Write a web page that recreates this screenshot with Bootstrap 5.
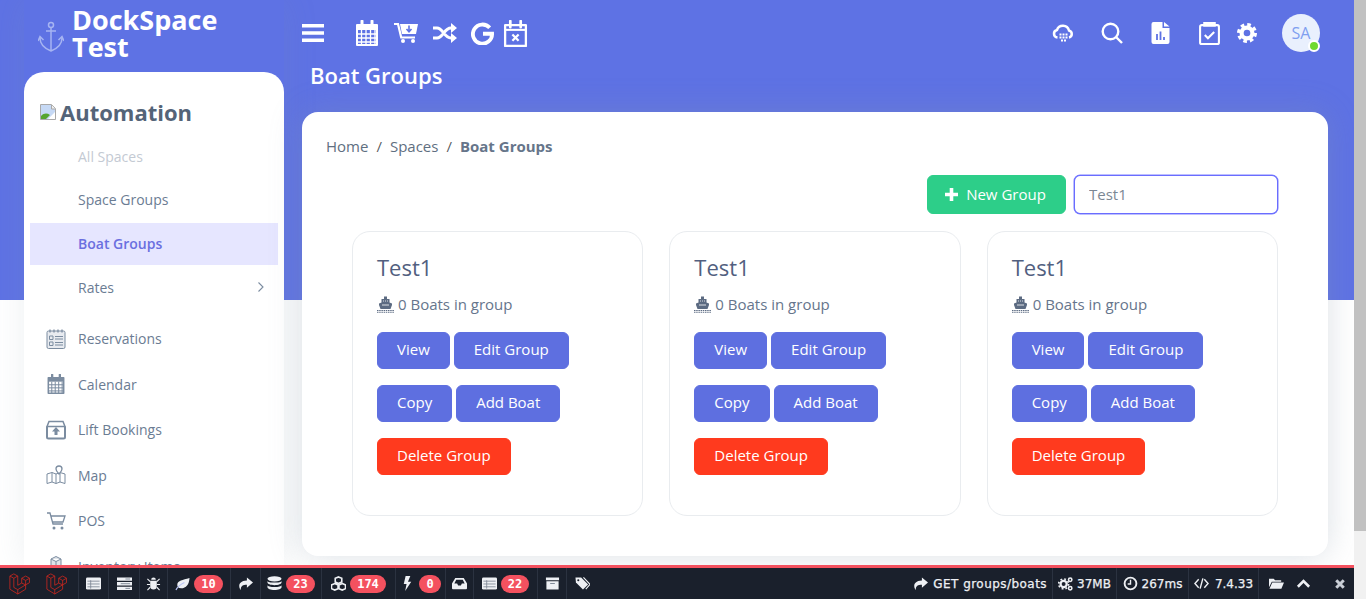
<!DOCTYPE html>
<html lang="en">
<head>
  <meta charset="UTF-8" />
  <meta name="viewport" content="width=device-width, initial-scale=1">
  <title>Boat Groups</title>
  <link href="https://cdn.jsdelivr.net/npm/bootstrap@5.3.0/dist/css/bootstrap.min.css" rel="stylesheet">
  <style>
    html, body { height: 100%; overflow: hidden; }
    body { font-family: "Open Sans", sans-serif; font-size: 14px; color: #525f7f; background: #fff; }

    /* fake browser scrollbar */
    .rail { width: 12px; background: #f1f1f1; flex: none; }
    .rail-thumb { height: 531px; background: #c1c1c1; }

    .page-col { flex: 1 1 auto; min-width: 0; height: 599px; }
    .stage { flex: 1 1 auto; min-height: 0; overflow: hidden; background: linear-gradient(#5e72e4 300px, #fff 300px); }

    /* sidebar */
    .side-col { width: 260px; margin-left: 24px; flex: none; box-shadow: 0 0 2rem 0 rgba(136,152,170,.15); }
    .brand-row { height: 72px; padding-left: 14px; color: #fff; }
    .brand-name { font-size: 27px; font-weight: 700; line-height: 27px; margin-left: 8px; margin-top: -6px; }
    .anchor-ico { width: 26px; height: 32px; color: #a6b4f2; margin-top: 2px; }
    .side-panel { background: #fff; border-radius: 20px 20px 0 0; height: 500px; padding: 25px 6px 0; }
    .side-title { font-size: 22px; font-weight: 700; color: #546478; line-height: 30px; margin: 0 0 8.6px 10px; display: flex; align-items: center; }
    .broken-ico { width: 16px; height: 16px; margin-right: 4px; }
    .side-link { display: flex; align-items: center; padding: 0 13px 1px 48px; color: #6b7c93; text-decoration: none; font-size: 14px; }
    .sub-link { height: 42px; margin-bottom: 1.67px; }
    .main-link { height: 45.5px; padding-left: 16px; }
    .side-link.is-faded { color: #c4cad3; }
    .side-link.is-active { background: #e6e6ff; color: #6a6fe0; font-weight: 600; }
    .side-ico { width: 20px; height: 20px; margin-right: 12px; color: #7b8ca0; flex: none; }
    .side-spacer { height: 6.5px; }

    /* main */
    .main-col { flex: 1 1 auto; min-width: 0; padding: 0 26px 0 18px; }
    .top-row { height: 66px; color: #fff; }
    .top-ico { color: #fff; flex: none; display: block; }
    .menu-ico { margin-right: 31px; }
    .ms-15 { margin-right: 15px; }
    .ms-14 { margin-right: 14px; }
    .ms-9 { margin-right: 9px; }
    .ms-26 { margin-right: 26px; }
    .ms-28 { margin-right: 28px; }
    .ms-29 { margin-right: 29px; }
    .ms-17 { margin-right: 17px; }
    .ms-25 { margin-right: 25px; }
    .avatar-end { width: 8px; }
    .page-heading { font-size: 22px; font-weight: 600; color: #fff; line-height: 22px; margin: -2px 0 26px 8px; height: 22px; }
    .avatar-box { width: 38px; height: 38px; background: #e9f0fd; color: #7f9ff0; font-size: 16px; position: relative; }
    .avatar-dot { position: absolute; right: 0; bottom: 0; width: 12px; height: 12px; border: 2px solid #fff; background: #6fd92f; border-radius: 50%; }
    .sheet { border-radius: 16px; height: 444px; padding: 24px; border: 0; box-shadow: 0 0 2rem 0 rgba(136,152,170,.3); }
    .sheet .breadcrumb { font-size: 15px; margin: -1px 0 18px; line-height: 22px; }
    .sheet .breadcrumb a { color: #5f6f81; text-decoration: none; }
    .sheet .breadcrumb-item.active { color: #66758a; font-weight: 700; }
    .sheet .breadcrumb-item.active::before { font-weight: 400; }
    .tools-row { padding-right: 26px; gap: 8px; margin-bottom: 17px; }
    .btn-new { background: #2dce89; border-color: #2dce89; color: #fff; width: 139px; height: 39px; font-size: 15px; border-radius: 6px; padding: 0 2px 0 0; }
    .search-box { width: 204px; height: 39px; border: 1px solid #6a6dff; border-radius: 6px; font-size: 15px; color: #7b8794; padding: 0 14px 2px; box-shadow: 0 0 0 .5px #7d80ff; }
    .boats-row { --bs-gutter-x: 26px; margin-left: 13px; margin-right: 13px; }
    .boat-card { height: 285px; border: 1px solid #e9ecef; border-radius: 18px; box-shadow: none; }
    .boat-card .card-body { padding: 22px 24px 24px; }
    .boat-card h5 { font-size: 22px; font-weight: 400; color: #525f7f; line-height: 26px; margin: 0 0 14px; }
    .boat-line { font-size: 15px; color: #66758c; line-height: 20px; margin-bottom: 18px; display: flex; align-items: center; }
    .ship-ico { width: 17px; height: 17px; margin-right: 4px; color: #5c6b82; }
    .btn-row { gap: 4px; margin-bottom: 16px; }
    .btn-boat, .btn-del { height: 37px; padding: 0 19px 2px; font-size: 15px; color: #fff; border-radius: 6px; }
    .btn-boat { background: #5e6fe0; border-color: #5e6fe0; }
    .btn-del { background: #ff3a1e; border-color: #ff3a1e; }

    /* debug bar */
    .dbar { flex: none; height: 34px; background: #1a202c; border-top: 3px solid #f4515f; color: #eef0f4; font-family: "DejaVu Sans", sans-serif; font-size: 12px; font-weight: 400; }
    .dtab { height: 100%; display: flex; align-items: center; justify-content: center; gap: 4px; border-right: 1px solid #2b3240; flex: none; }
    .dtab svg { width: 15px; height: 15px; flex: none; display: block; }
    .dlogo { width: 79px; padding-left: 9px; justify-content: flex-start; gap: 16px; }
    .dlogo svg { width: 21px; height: 23px; color: #d0281f; }
    .tw-28 { width: 28px; }
    .tw-29 { width: 29px; }
    .tw-30 { width: 30px; }
    .tw-31 { width: 31px; }
    .tw-50 { width: 50px; }
    .tw-61 { width: 61px; }
    .tw-63 { width: 63px; }
    .tw-64 { width: 64px; }
    .tw-70 { width: 70px; gap: 6px; }
    .tw-72 { width: 72px; }
    .tw-74 { width: 74px; }
    .dcount { background: #f4515f; color: #fff; font-family: "DejaVu Sans Mono", monospace; font-weight: 700; font-size: 12px; height: 18px; line-height: 18px; padding: 0 7px; border-radius: 9px; }
    .dtext { white-space: nowrap; -webkit-text-stroke: .25px #eef0f4; }
    .dtext-wide { letter-spacing: .45px; }
    .dbar-end { margin-left: auto; }
    .dtab-get { padding: 0 5px; gap: 5px; }
    .dtab-plain { border-right: 0; justify-content: flex-start; }
    .dt-folder { padding-left: 10px; }
    .dt-up { padding-left: 12px; }
    .dt-close { padding: 0 8px 0 23px; }
    .dt-close svg { width: 12px; height: 12px; }
  </style>
</head>
<body class="d-flex">
  <svg width="0" height="0" class="d-none">
    <defs>
      <symbol id="i-cal" viewBox="0 0 24 26"><path d="M2 5h20v20H2z" fill="none" stroke="currentColor" stroke-width="2" stroke-linejoin="round"/><path d="M2 5h20v5H2z" fill="currentColor"/><path d="M7 1v6M17 1v6" stroke="currentColor" stroke-width="3" stroke-linecap="round"/><path d="M2 14h20M2 18h20M2 22h20M6.5 10v15M11 10v15M15.500 10v15M20 10v15" stroke="currentColor" stroke-width="1.300"/></symbol>
      <symbol id="i-calx" viewBox="0 0 24 26"><path d="M2 5h20v20H2z" fill="none" stroke="currentColor" stroke-width="2.200" stroke-linejoin="round"/><path d="M2 9.500h20" stroke="currentColor" stroke-width="2"/><path d="M7 1v6M17 1v6" stroke="currentColor" stroke-width="2.600" stroke-linecap="round"/><path d="M9 14l6 6M15 14l-6 6" stroke="currentColor" stroke-width="2.200"/></symbol>
      <symbol id="i-cartdown" viewBox="0 0 24 20"><path d="M6 1h18l-2 10H8z" fill="currentColor"/><path d="M15 2.500v6M12.500 6l2.500 2.800L17.500 6" fill="none" stroke="#5e72e4" stroke-width="1.600"/><path d="M0 1h4l3.200 13.500H21" fill="none" stroke="currentColor" stroke-width="2.200"/><circle cx="9" cy="18" r="2" fill="currentColor"/><circle cx="19" cy="18" r="2" fill="currentColor"/></symbol>
      <symbol id="i-shuffle" viewBox="0 0 24 20"><path d="M0 5h4c6 0 7 10 14 10h1M0 15h4c6 0 7-10 14-10h1" fill="none" stroke="currentColor" stroke-width="3"/><path d="M18 0l6 5-6 5zM18 10l6 5-6 5z" fill="currentColor"/></symbol>
      <symbol id="i-g" viewBox="0 0 24 24"><path d="M19.500 6a10 10 0 1 0 2.500 6.300H12.500" fill="none" stroke="currentColor" stroke-width="4"/></symbol>
      <symbol id="i-cloud" viewBox="0 0 24 20"><path d="M6.500 14.500a3.800 3.800 0 0 1-.5-7.500 6.300 6.300 0 0 1 12 .5 3.600 3.600 0 0 1 0 7" fill="none" stroke="currentColor" stroke-width="2.500"/><path d="M8.500 10.500h2v2h-2zM11.500 10.500h2v2h-2zM14.500 10.500h2v2h-2zM8.500 13.500h2v2h-2zM11.500 13.500h2v2h-2zM14.500 13.500h2v2h-2zM10 16.500h2v2h-2zM13 16.500h2v2h-2z" fill="currentColor"/></symbol>
      <symbol id="i-search" viewBox="0 0 22 22"><circle cx="9.500" cy="9.500" r="7.800" fill="none" stroke="currentColor" stroke-width="2.400"/><path d="M15 15l6 6" stroke="currentColor" stroke-width="2.400"/></symbol>
      <symbol id="i-file" viewBox="0 0 18 22"><path d="M2 0h9v6h7v14a2 2 0 0 1-2 2H2a2 2 0 0 1-2-2V2a2 2 0 0 1 2-2zM12.500 0L18 4.500h-5.500z" fill="currentColor"/><path d="M5.500 12v6M9 9.500V18M12.500 15v3" stroke="#5e72e4" stroke-width="1.800"/></symbol>
      <symbol id="i-clip" viewBox="0 0 20 22"><path d="M2.500 3h15a1.500 1.500 0 0 1 1.500 1.500v15a1.500 1.500 0 0 1-1.500 1.500h-15A1.500 1.500 0 0 1 1 19.500v-15A1.500 1.500 0 0 1 2.500 3z" fill="none" stroke="currentColor" stroke-width="2"/><path d="M4 0h12v4.500H4z" fill="currentColor"/><path d="M5.500 12.500l3 3 6-6" fill="none" stroke="currentColor" stroke-width="2"/></symbol>
      <symbol id="i-gear" viewBox="0 0 24 24"><circle cx="12" cy="12" r="6.500" fill="none" stroke="currentColor" stroke-width="5"/><circle cx="12" cy="12" r="10" fill="none" stroke="currentColor" stroke-width="4" stroke-dasharray="4.300 3.550"/></symbol>
      <symbol id="i-anchor" viewBox="0 0 26 32"><circle cx="13" cy="4" r="2.500" fill="none" stroke="currentColor" stroke-width="1.500"/><path d="M13 6.500V30M8 10h10M2 17c0 7 6 11 11 13 5-2 11-6 11-13M0 20l2-4.500 3.500 3.500M26 20l-2-4.500-3.500 3.500" fill="none" stroke="currentColor" stroke-width="1.500"/></symbol>
      <symbol id="i-broken" viewBox="0 0 16 16"><path d="M.5.500h11l4 4v11H.5z" fill="#fff" stroke="#a9a9a9"/><path d="M1 1h10v4h4v3L8 15H1z" fill="#c6d9f5"/><path d="M1 15v-3c3-3 6-3 9-1l-4 4z" fill="#56a52e"/><path d="M11.500 1v4h4" fill="#eee" stroke="#a9a9a9"/></symbol>
      <symbol id="i-resv" viewBox="0 0 20 20"><rect x="1" y="2" width="18" height="17.500" rx="1.500" fill="#e8ebf0" stroke="currentColor"/><path d="M4 .5v3M8 .5v3M12 .5v3M16 .5v3" stroke="currentColor" stroke-width="1.300"/><path d="M9 7.500h8M9 10h8M9 13.500h8M9 16h8" stroke="currentColor"/><path d="M3.500 7h3.500v3.500H3.500zM3.500 13h3.500v3.500H3.500z" fill="none" stroke="currentColor"/></symbol>
      <symbol id="i-lift" viewBox="0 0 20 20"><path d="M1 6.500V17a1.500 1.500 0 0 0 1.500 1.500h15A1.500 1.500 0 0 0 19 17V6.500" fill="none" stroke="currentColor" stroke-width="2"/><path d="M3 1.500h14L19 6.500H1z" fill="none" stroke="currentColor" stroke-width="1.500"/><path d="M10 7l-4 4.500h2.500V15h3v-3.500H14z" fill="currentColor"/></symbol>
      <symbol id="i-map" viewBox="0 0 20 20"><path d="M1 9l5-1.500 4 1.500 4-1.500 5 1.500v9.500l-5-1.500-4 1.500-4-1.500-5 1.500zM6 7.500V17M10 9v9.500M14 7.500V17" fill="none" stroke="currentColor"/><path d="M13 1a3 3 0 0 1 3 3c0 2-3 5-3 5s-3-3-3-5a3 3 0 0 1 3-3z" fill="#fff" stroke="currentColor" stroke-width="1.300"/></symbol>
      <symbol id="i-cart" viewBox="0 0 20 20"><path d="M1 2h3l3 11h10M4.800 5H19l-2 6H6.500" fill="none" stroke="currentColor" stroke-width="1.300"/><circle cx="8" cy="17" r="1.500" fill="currentColor"/><circle cx="16" cy="17" r="1.500" fill="currentColor"/></symbol>
      <symbol id="i-box" viewBox="0 0 20 20"><path d="M5 3l5-2.500L15 3v15l-5 2-5-2zM10 5.500V20M5 3l5 2.500L15 3" fill="#dfe3e8" stroke="currentColor"/></symbol>
      <symbol id="i-ship" viewBox="0 0 17 17"><path d="M7 .5h3V3H7zM4.500 3h8v3.500l2.500 1V9l-1.500 4h-10L2 9V7.500l2.500-1z" fill="currentColor"/><path d="M6 5h1M8 5h1M10 5h1M5 9h7" stroke="#fff" stroke-width=".8"/><path d="M0 14.500h17M0 16.200h17" stroke="currentColor" stroke-width="1.100" stroke-dasharray="1.500 .7"/></symbol>
      <symbol id="i-lara" viewBox="0 0 24 26"><path d="M1 4.500L5.500 2 10 4.500V15l4.500-2.500V7L19 4.500 23.500 7v5L19 14.500v5L10 25l-9-5.500zM1 4.500L5.500 7 10 4.500M5.500 7v10.500L10 20l9-5.500M14.500 7L19 9.500 23.500 7M19 9.500v5M14.500 12.500l4.500 2M10 20v5" fill="none" stroke="currentColor" stroke-width=".9" stroke-linejoin="round"/></symbol>
      <symbol id="d-list" viewBox="0 0 16 16"><rect y="1.500" width="16" height="13" rx="1.500" fill="currentColor"/><path d="M1.500 5.500h13M1.500 8.500h13M1.500 11.500h13M5 4.500v9" stroke="#7d8694" stroke-width=".9"/></symbol>
      <symbol id="d-server" viewBox="0 0 16 16"><path d="M0 1.500h16v3.500H0zM0 6.500h16V10H0zM0 11.500h16V15H0z" fill="currentColor"/><path d="M9 3.200h5M4 8.200h10M9 13.200h5" stroke="#7d8694"/></symbol>
      <symbol id="d-bug" viewBox="0 0 16 16"><path d="M5.500 4a2.500 2.500 0 0 1 5 0zM4.500 5h7v6a3.500 3.500 0 0 1-7 0z" fill="currentColor"/><path d="M1.500 3l3 3M14.500 3l-3 3M1 9h3.500M15 9h-3.500M1.500 15l3-3M14.500 15l-3-3" stroke="currentColor" stroke-width="1.200"/></symbol>
      <symbol id="d-leaf" viewBox="0 0 16 16"><path d="M15.500 2C15 9 12 13 6.500 13 3.500 13 2 11 2.500 8.500 3 5 8 4 15.500 2z" fill="currentColor"/><path d="M1 15C3 11 6 9 10 7" fill="none" stroke="#b9c3f5" stroke-width="1.200"/></symbol>
      <symbol id="d-share" viewBox="0 0 16 16"><path d="M9.500 1.500L16 7l-6.500 5.500V9.300C5 9.300 2.800 10.500 3 15 .5 12.500-.5 5.200 9.500 4.800z" fill="currentColor"/></symbol>
      <symbol id="d-db" viewBox="0 0 16 16"><ellipse cx="8" cy="3" rx="7.500" ry="2.800" fill="currentColor"/><path d="M.5 5v2c0 1.500 3.300 2.800 7.500 2.800s7.500-1.300 7.500-2.800V5C15.500 6.500 12 7 8 7S.5 6.500.5 5zM.5 9.500v2.500C.5 13.500 3.800 15 8 15s7.500-1.500 7.500-3V9.500c0 1.500-3.500 2.200-7.500 2.200S.5 11 .5 9.500z" fill="currentColor"/></symbol>
      <symbol id="d-cubes" viewBox="0 0 16 16"><path d="M8 1l3.500 1.500v4L8 8 4.500 6.500v-4zM4 8l3.500 1.500v4L4 15 .5 13.500v-4zM12 8l3.500 1.500v4L12 15l-3.500-1.500v-4z" fill="none" stroke="currentColor" stroke-width="1.700"/></symbol>
      <symbol id="d-bolt" viewBox="0 0 16 16"><path d="M6 0h5L8.500 6H12L5.500 16 7 8.500H4z" fill="currentColor"/></symbol>
      <symbol id="d-inbox" viewBox="0 0 16 16"><path d="M3.500 2h9L16 8v5a1 1 0 0 1-1 1H1a1 1 0 0 1-1-1V8zM4.500 4L2.500 8h3l1 2h3l1-2h3l-2-4z" fill="currentColor" fill-rule="evenodd"/></symbol>
      <symbol id="d-archive" viewBox="0 0 16 16"><path d="M1 1.500h14v3H1zM1.500 5.500h13v9h-13z" fill="currentColor"/><path d="M5.500 8h5" stroke="#7d8694"/></symbol>
      <symbol id="d-tags" viewBox="0 0 16 16"><path d="M.5 1.500h6l7.500 7.500-5.500 5.500L1 7z" fill="currentColor"/><path d="M9 1.500l7 7.500-4.500 5" fill="none" stroke="currentColor" stroke-width="1.200"/><circle cx="3.500" cy="4.500" r="1.100" fill="#1a202c"/></symbol>
      <symbol id="d-cogs" viewBox="0 0 16 16"><circle cx="6" cy="8.500" r="3.300" fill="none" stroke="currentColor" stroke-width="2.400"/><circle cx="6" cy="8.500" r="5.300" fill="none" stroke="currentColor" stroke-width="1.800" stroke-dasharray="2 2.160"/><circle cx="13" cy="4" r="1.800" fill="none" stroke="currentColor" stroke-width="1.700"/><circle cx="13" cy="13" r="1.800" fill="none" stroke="currentColor" stroke-width="1.700"/></symbol>
      <symbol id="d-clock" viewBox="0 0 16 16"><circle cx="8" cy="8" r="6.300" fill="none" stroke="currentColor" stroke-width="2"/><path d="M8 4v4.500H5" fill="none" stroke="currentColor" stroke-width="1.500"/></symbol>
      <symbol id="d-code" viewBox="0 0 16 16"><path d="M5 3.500L1 8l4 4.500M11 3.500l4 4.500-4 4.500M9.500 2.500l-3 11" fill="none" stroke="currentColor" stroke-width="1.500"/></symbol>
      <symbol id="d-folder" viewBox="0 0 16 16"><path d="M0 3h5l1.500 1.500H13V6H3L0 12zM3.500 7H16l-2.800 6.500H.5z" fill="currentColor"/></symbol>
      <symbol id="d-up" viewBox="0 0 16 16"><path d="M2 11.500l6-6 6 6" fill="none" stroke="currentColor" stroke-width="2.800"/></symbol>
      <symbol id="d-x" viewBox="0 0 16 16"><path d="M3 3l10 10M13 3L3 13" stroke="#c9ced6" stroke-width="4"/></symbol>
    </defs>
  </svg>

  <div class="page-col d-flex flex-column">
    <div class="stage d-flex">
      <!-- Sidebar -->
      <aside class="side-col">
        <div class="brand-row d-flex align-items-center">
          <svg class="anchor-ico"><use href="#i-anchor"/></svg>
          <div class="brand-name">DockSpace<br>Test</div>
        </div>
        <div class="side-panel">
          <div class="side-title"><svg class="broken-ico"><use href="#i-broken"/></svg>Automation</div>
          <a class="side-link sub-link is-faded" href="#">All Spaces</a>
          <a class="side-link sub-link" href="#">Space Groups</a>
          <a class="side-link sub-link is-active" href="#">Boat Groups</a>
          <a class="side-link sub-link justify-content-between" href="#">Rates
            <svg width="8" height="12" viewBox="0 0 8 12"><path d="M1.500 1.500L6 6l-4.500 4.500" fill="none" stroke="#7b8ca0" stroke-width="1.100"/></svg>
          </a>
          <div class="side-spacer"></div>
          <a class="side-link main-link" href="#"><svg class="side-ico"><use href="#i-resv"/></svg>Reservations</a>
          <a class="side-link main-link" href="#"><svg class="side-ico"><use href="#i-cal"/></svg>Calendar</a>
          <a class="side-link main-link" href="#"><svg class="side-ico"><use href="#i-lift"/></svg>Lift Bookings</a>
          <a class="side-link main-link" href="#"><svg class="side-ico"><use href="#i-map"/></svg>Map</a>
          <a class="side-link main-link" href="#"><svg class="side-ico"><use href="#i-cart"/></svg>POS</a>
          <a class="side-link main-link" href="#"><svg class="side-ico"><use href="#i-box"/></svg>Inventory Items</a>
        </div>
      </aside>

      <!-- Main -->
      <main class="main-col">
        <div class="top-row d-flex align-items-center">
          <svg class="top-ico menu-ico" width="22" height="18" viewBox="0 0 22 18"><path d="M0 1.800h22M0 9h22M0 16.200h22" stroke="#fff" stroke-width="3.400" stroke-linejoin="round"/></svg>
          <div class="d-flex align-items-center flex-grow-1">
            <svg class="top-ico ms-15" width="24" height="26"><use href="#i-cal"/></svg>
            <svg class="top-ico ms-15" width="24" height="20"><use href="#i-cartdown"/></svg>
            <svg class="top-ico ms-14" width="24" height="20"><use href="#i-shuffle"/></svg>
            <svg class="top-ico ms-9" width="23" height="23"><use href="#i-g"/></svg>
            <svg class="top-ico" width="25" height="27"><use href="#i-calx"/></svg>
          </div>
          <div class="d-flex align-items-center">
            <svg class="top-ico ms-26" width="24" height="20"><use href="#i-cloud"/></svg>
            <svg class="top-ico ms-28" width="22" height="22"><use href="#i-search"/></svg>
            <svg class="top-ico ms-29" width="19" height="22"><use href="#i-file"/></svg>
            <svg class="top-ico ms-17" width="21" height="23"><use href="#i-clip"/></svg>
            <svg class="top-ico ms-25" width="20" height="20"><use href="#i-gear"/></svg>
            <div class="avatar-box rounded-circle d-flex align-items-center justify-content-center">SA<span class="avatar-dot"></span></div>
            <div class="avatar-end"></div>
          </div>
        </div>
        <h1 class="page-heading">Boat Groups</h1>

        <div class="card sheet">
          <nav aria-label="breadcrumb">
            <ol class="breadcrumb">
              <li class="breadcrumb-item"><a href="#">Home</a></li>
              <li class="breadcrumb-item"><a href="#">Spaces</a></li>
              <li class="breadcrumb-item active" aria-current="page">Boat Groups</li>
            </ol>
          </nav>
          <div class="tools-row d-flex justify-content-end">
            <button class="btn btn-new d-flex align-items-center justify-content-center" type="button">
              <svg width="13" height="13" viewBox="0 0 13 13" class="me-2"><path d="M6.500 0v13M0 6.500h13" stroke="#fff" stroke-width="3.600"/></svg>New Group
            </button>
            <input class="form-control search-box" type="text" value="Test1">
          </div>
          <div class="row row-cols-3 boats-row" id="boats"></div>
        </div>
      </main>
    </div>

    <!-- Debug bar -->
    <div class="dbar d-flex">
      <div class="dtab dlogo"><svg><use href="#i-lara"/></svg><svg><use href="#i-lara"/></svg></div>
      <div class="dtab tw-30"><svg><use href="#d-list"/></svg></div>
      <div class="dtab tw-31"><svg><use href="#d-server"/></svg></div>
      <div class="dtab tw-28"><svg><use href="#d-bug"/></svg></div>
      <div class="dtab tw-63"><svg><use href="#d-leaf"/></svg><span class="dcount">10</span></div>
      <div class="dtab tw-30"><svg><use href="#d-share"/></svg></div>
      <div class="dtab tw-61"><svg><use href="#d-db"/></svg><span class="dcount">23</span></div>
      <div class="dtab tw-74"><svg><use href="#d-cubes"/></svg><span class="dcount">174</span></div>
      <div class="dtab tw-50"><svg><use href="#d-bolt"/></svg><span class="dcount">0</span></div>
      <div class="dtab tw-28"><svg><use href="#d-inbox"/></svg></div>
      <div class="dtab tw-64"><svg><use href="#d-list"/></svg><span class="dcount">22</span></div>
      <div class="dtab tw-29"><svg><use href="#d-archive"/></svg></div>
      <div class="dtab dtab-plain tw-31 justify-content-center"><svg><use href="#d-tags"/></svg></div>
      <div class="dbar-end d-flex">
        <div class="dtab dtab-get"><svg><use href="#d-share"/></svg><span class="dtext dtext-wide">GET groups/boats</span></div>
        <div class="dtab tw-64"><svg><use href="#d-cogs"/></svg><span class="dtext">37MB</span></div>
        <div class="dtab tw-72"><svg><use href="#d-clock"/></svg><span class="dtext">267ms</span></div>
        <div class="dtab tw-70"><svg><use href="#d-code"/></svg><span class="dtext">7.4.33</span></div>
        <div class="dtab dtab-plain dt-folder"><svg><use href="#d-folder"/></svg></div>
        <div class="dtab dtab-plain dt-up"><svg><use href="#d-up"/></svg></div>
        <div class="dtab dtab-plain dt-close"><svg><use href="#d-x"/></svg></div>
      </div>
    </div>
  </div>

  <div class="rail"><div class="rail-thumb"></div></div>

  <script>
    // three identical group cards
    const holder = document.getElementById('boats');
    for (let i = 0; i < 3; i++) {
      holder.innerHTML += `
        <div class="col">
          <div class="card boat-card">
            <div class="card-body">
              <h5>Test1</h5>
              <div class="boat-line"><svg class="ship-ico"><use href="#i-ship"/></svg>0 Boats in group</div>
              <div class="d-flex btn-row"><a class="btn btn-boat d-flex align-items-center" href="#">View</a><a class="btn btn-boat d-flex align-items-center" href="#">Edit Group</a></div>
              <div class="d-flex btn-row"><a class="btn btn-boat d-flex align-items-center" href="#">Copy</a><a class="btn btn-boat d-flex align-items-center" href="#">Add Boat</a></div>
              <div class="d-flex btn-row"><a class="btn btn-del d-flex align-items-center" href="#">Delete Group</a></div>
            </div>
          </div>
        </div>`;
    }
  </script>
  <script src="https://cdn.jsdelivr.net/npm/bootstrap@5.3.0/dist/js/bootstrap.bundle.min.js"></script>
</body>
</html>
